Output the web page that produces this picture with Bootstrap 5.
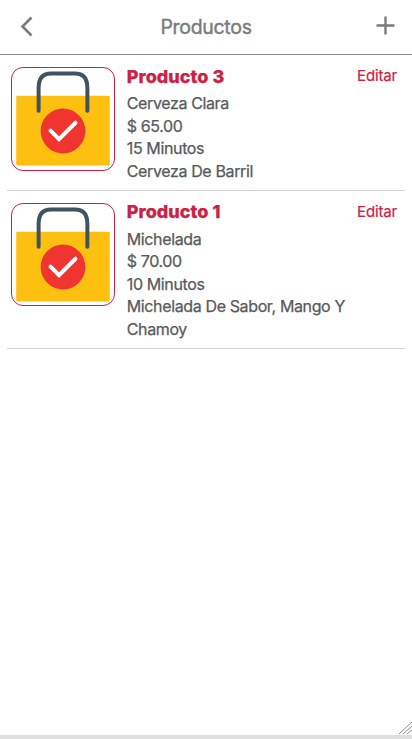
<!DOCTYPE html>
<html lang="es">
<head>
<meta charset="utf-8">
<meta name="viewport" content="width=device-width, initial-scale=1">
<title>Productos</title>
<link href="https://cdn.jsdelivr.net/npm/bootstrap@5.3.0/dist/css/bootstrap.min.css" rel="stylesheet">
<style>
body{font-family:Inter,"Liberation Sans",sans-serif;font-size:16px;line-height:22.5px;color:#58595b;background:#fff}
.screen{height:739px;border-bottom:4px solid #dedede}
.topbar{height:55px;border-bottom:1px solid #8c8c8c;color:#7b7b7b;padding:0 15px 0 19px}
.topbar h1{font-size:19.5px;line-height:24px;letter-spacing:-.3px;font-weight:400;-webkit-text-stroke:.4px;padding-left:2px}
.product{margin:0 7px;padding:12.25px 8px 7.25px 4px;border-bottom:1px solid #d3d3d3}
.thumb{width:104px;height:103.5px;border:1px solid #cd2144;border-radius:12px;margin-right:11.75px}
.info{-webkit-text-stroke:.25px;letter-spacing:-.37px}
.product h2{font-size:18px;line-height:22px;margin:-1.5px 0 4.5px;font-weight:800;color:#cd2144;letter-spacing:.05px}
.edit{font-size:15px;line-height:18px;color:#cd2144;-webkit-text-stroke:.2px;letter-spacing:-.15px}
.grip{color:#888}
</style>
<script src="https://cdn.jsdelivr.net/npm/bootstrap@5.3.0/dist/js/bootstrap.bundle.min.js"></script>
</head>
<body>
<svg class="d-none">
<symbol id="bag" viewBox="0 0 102 102">
<rect x="4" y="28" width="94" height="70" rx="1.5" fill="#fdbf10"/>
<path d="M26.5 43V20Q26.500 5.500 39 5.500H63Q75.500 5.500 75.500 20V43" fill="none" stroke="#40535e" stroke-width="4" stroke-linecap="round"/>
<circle cx="51" cy="63.300" r="22.500" fill="#f03430"/>
<path d="M38.500 63L47 71.500L63.500 55" fill="none" stroke="#fff" stroke-width="4" stroke-linecap="round" stroke-linejoin="miter"/>
</symbol>
</svg>
<div class="screen d-flex flex-column">
<header class="topbar d-flex align-items-center justify-content-between">
<svg width="16" height="22" viewBox="0 0 16 22" fill="none" stroke="currentColor" stroke-width="2.600"><path d="M12.500 1.500L3.500 10.500L12.500 19.500"/></svg>
<h1 class="m-0">Productos</h1>
<svg width="22" height="22" viewBox="0 0 22 22" fill="none" stroke="currentColor" stroke-width="2.400"><path d="M10.500 .500V18.500M1.500 9.500H19.500"/></svg>
</header>
<main class="flex-grow-1">
<article class="product d-flex align-items-start">
<svg class="thumb flex-shrink-0"><use href="#bag"/></svg>
<div class="info flex-grow-1"><h2>Producto 3</h2><div>Cerveza Clara</div><div>$ 65.00</div><div>15 Minutos</div><div>Cerveza De Barril</div></div>
<a class="edit text-decoration-none" href="#">Editar</a>
</article>
<article class="product d-flex align-items-start">
<svg class="thumb flex-shrink-0"><use href="#bag"/></svg>
<div class="info flex-grow-1"><h2>Producto 1</h2><div>Michelada</div><div>$ 70.00</div><div>10 Minutos</div><div>Michelada De Sabor, Mango Y Chamoy</div></div>
<a class="edit text-decoration-none" href="#">Editar</a>
</article>
</main>
<svg class="grip align-self-end" width="13" height="13" viewBox="0 0 13 13" stroke="currentColor" stroke-width="1"><path d="M0 12L13 0M4 12L13 4M8 12L13 8"/></svg>
</div>
</body>
</html>
